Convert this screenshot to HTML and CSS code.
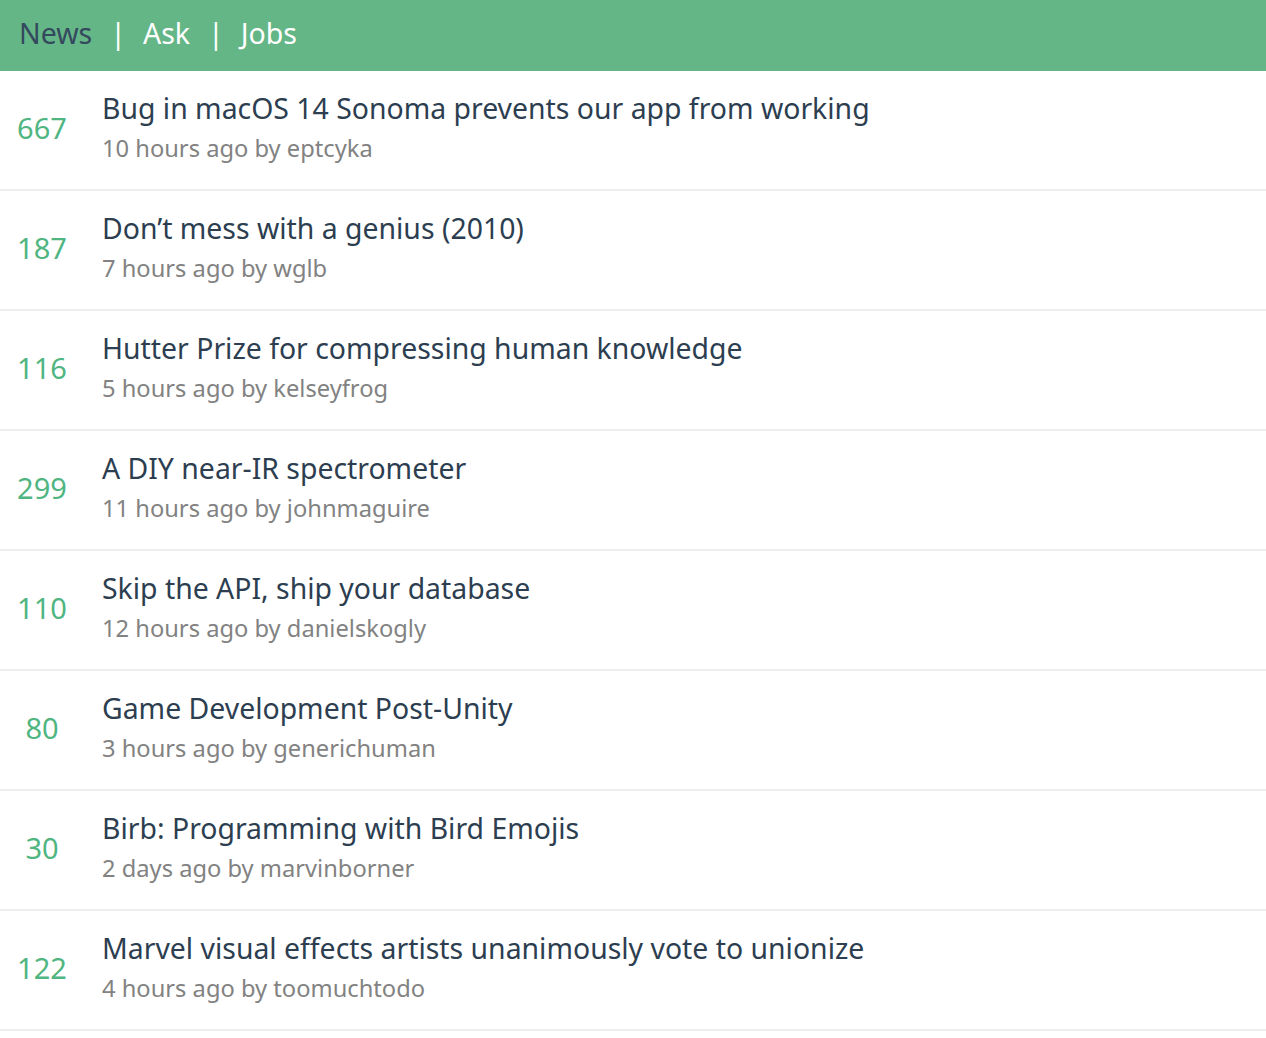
FILE: index.html
```html
<!DOCTYPE html>
<html>
<head>
<meta charset="utf-8">
<link rel="stylesheet" href="styles.css">
</head>
<body>
<header class="nav">
  <a class="nav-link active">News</a><span class="sep">|</span><a class="nav-link">Ask</a><span class="sep">|</span><a class="nav-link">Jobs</a>
</header>
<ul class="list">
  <li class="item"><span class="score">667</span><div class="body"><div class="title">Bug in macOS 14 Sonoma prevents our app from working</div><div class="meta">10 hours ago by eptcyka</div></div></li>
  <li class="item"><span class="score">187</span><div class="body"><div class="title">Don’t mess with a genius (2010)</div><div class="meta">7 hours ago by wglb</div></div></li>
  <li class="item"><span class="score">116</span><div class="body"><div class="title">Hutter Prize for compressing human knowledge</div><div class="meta">5 hours ago by kelseyfrog</div></div></li>
  <li class="item"><span class="score">299</span><div class="body"><div class="title">A DIY near-IR spectrometer</div><div class="meta">11 hours ago by johnmaguire</div></div></li>
  <li class="item"><span class="score">110</span><div class="body"><div class="title">Skip the API, ship your database</div><div class="meta">12 hours ago by danielskogly</div></div></li>
  <li class="item"><span class="score">80</span><div class="body"><div class="title">Game Development Post-Unity</div><div class="meta">3 hours ago by generichuman</div></div></li>
  <li class="item"><span class="score">30</span><div class="body"><div class="title">Birb: Programming with Bird Emojis</div><div class="meta">2 days ago by marvinborner</div></div></li>
  <li class="item"><span class="score">122</span><div class="body"><div class="title">Marvel visual effects artists unanimously vote to unionize</div><div class="meta">4 hours ago by toomuchtodo</div></div></li>
</ul>
</body>
</html>
```
FILE: styles.css
```css
* { box-sizing: border-box; }
body {
  margin: 0;
  background: #fff;
  font-family: "Noto Sans", "Liberation Sans", sans-serif;
}
.nav {
  height: 71px;
  background: #64b687;
  display: flex;
  align-items: center;
  padding: 0 0 6px 19px;
  font-size: 28.5px;
  color: #fff;
}
.nav-link { color: #fff; }
.nav-link.active { color: #34495e; }
.sep { margin: 0 17px 0 18px; }
.list {
  list-style: none;
  margin: 0;
  padding: 0;
}
.item {
  height: 120px;
  border-bottom: 2px solid #eee;
  display: flex;
  align-items: center;
  padding-bottom: 6px;
}
.score {
  width: 84px;
  text-align: center;
  color: #4fb581;
  font-size: 29px;
}
.body {
  margin-left: 18px;
}
.title {
  color: #2c3e50;
  font-size: 28.4px;
  line-height: 38px;
}
.meta {
  color: #828282;
  font-size: 23.7px;
  line-height: 36px;
  margin-top: 3px;
}
```
